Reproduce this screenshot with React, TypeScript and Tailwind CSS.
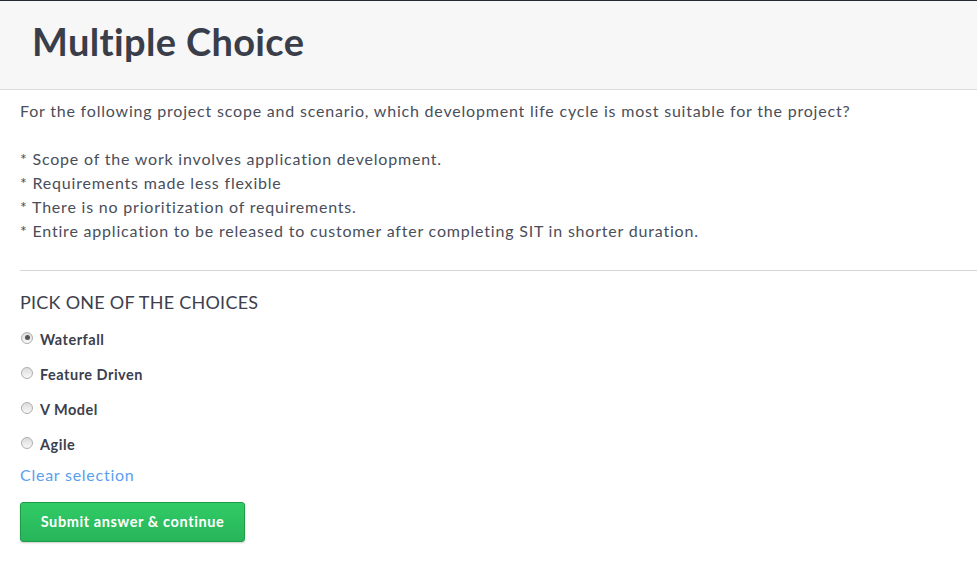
import { useState } from "react";

const choices = ["Waterfall", "Feature Driven", "V Model", "Agile"];

const bullets = [
  "Scope of the work involves application development.",
  "Requirements made less flexible",
  "There is no prioritization of requirements.",
  "Entire application to be released to customer after completing SIT in shorter duration.",
];

function Radio({ checked }: { checked: boolean }) {
  return (
    <span className="mt-[-4px] flex h-[12px] w-[12px] shrink-0 items-center justify-center rounded-full border border-[#aeaeae] bg-gradient-to-b from-[#dcdcdc] to-[#f8f8f8]">
      {checked && <span className="h-[5px] w-[5px] rounded-full bg-[#555]" />}
    </span>
  );
}

export default function App() {
  const [picked, setPicked] = useState<string | null>("Waterfall");

  return (
    <div className="min-h-[575px] bg-white font-['Lato','Open_Sans',sans-serif] text-[#4a4e5a]">
      <div className="h-[90px] border-t border-b border-t-[#262a36] border-b-[#dcdcdc] bg-[#f7f7f7] px-[32px] pt-[16px]">
        <h1 className="text-[38px] font-bold leading-[48px] tracking-[0.35px] text-[#393e4a]">Multiple Choice</h1>
      </div>

      <div className="pl-[20px] pt-[9px]">
        <p className="text-[16px] leading-[24px] tracking-[0.8px]">
          For the following project scope and scenario, which development life cycle is most suitable for the project?
        </p>
        <div className="mt-[24px] text-[16px] leading-[24px] tracking-[0.8px]">
          {bullets.map((b) => (
            <div key={b}>* {b}</div>
          ))}
        </div>

        <div className="mt-[27px] border-t border-[#d5d5d5]" />

        <div className="mt-[19px] text-[18px] uppercase leading-[24px] tracking-[0.25px] text-[#3c404c]">
          Pick one of the choices
        </div>

        <div className="mt-[8px] flex flex-col">
          {choices.map((c) => (
            <label
              key={c}
              className="flex h-[35px] cursor-pointer items-center gap-[7px] pl-[1px]"
              onClick={() => setPicked(c)}
            >
              <Radio checked={picked === c} />
              <span className="text-[14.5px] font-bold tracking-[0.5px] text-[#3c404c]">{c}</span>
            </label>
          ))}
        </div>

        <button
          className="mt-[1px] block text-[16px] leading-[24px] tracking-[0.75px] text-[#5aa0f0]"
          onClick={() => setPicked(null)}
        >
          Clear selection
        </button>

        <button className="mt-[15px] h-[40px] w-[225px] rounded-[3px] border border-[#1f9c48] bg-gradient-to-b from-[#31cb66] to-[#27b55a] text-[14.5px] font-bold tracking-[0.6px] text-white shadow-[0_1px_2px_rgba(0,0,0,0.2)]">
          Submit answer &amp; continue
        </button>
      </div>
    </div>
  );
}
